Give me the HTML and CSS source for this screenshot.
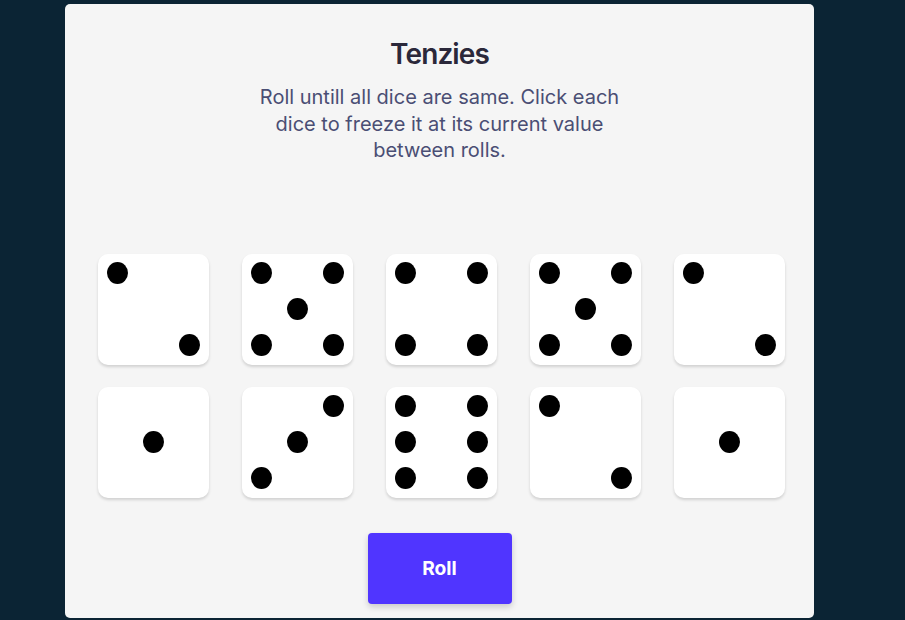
FILE: index.html
```html
<!DOCTYPE html>
<html lang="en">
<head>
<meta charset="utf-8">
<title>Tenzies</title>
<link rel="stylesheet" href="styles.css">
</head>
<body>
<main class="card">
  <h1 class="title">Tenzies</h1>
  <p class="instructions">Roll untill all dice are same. Click each dice to freeze it at its current value between rolls.</p>
  <div class="dice">
    <div class="die"><span class="dot r1 c1"></span><span class="dot r3 c3"></span></div>
    <div class="die"><span class="dot r1 c1"></span><span class="dot r1 c3"></span><span class="dot r2 c2"></span><span class="dot r3 c1"></span><span class="dot r3 c3"></span></div>
    <div class="die"><span class="dot r1 c1"></span><span class="dot r1 c3"></span><span class="dot r3 c1"></span><span class="dot r3 c3"></span></div>
    <div class="die"><span class="dot r1 c1"></span><span class="dot r1 c3"></span><span class="dot r2 c2"></span><span class="dot r3 c1"></span><span class="dot r3 c3"></span></div>
    <div class="die"><span class="dot r1 c1"></span><span class="dot r3 c3"></span></div>
    <div class="die"><span class="dot r2 c2"></span></div>
    <div class="die"><span class="dot r1 c3"></span><span class="dot r2 c2"></span><span class="dot r3 c1"></span></div>
    <div class="die"><span class="dot r1 c1"></span><span class="dot r1 c3"></span><span class="dot r2 c1"></span><span class="dot r2 c3"></span><span class="dot r3 c1"></span><span class="dot r3 c3"></span></div>
    <div class="die"><span class="dot r1 c1"></span><span class="dot r3 c3"></span></div>
    <div class="die"><span class="dot r2 c2"></span></div>
  </div>
  <button class="roll">Roll</button>
</main>
</body>
</html>
```
FILE: styles.css
```css
* { box-sizing: border-box; }
html, body { margin: 0; padding: 0; }
body {
  background: #0B2434;
  font-family: Inter, "Noto Sans", sans-serif;
  width: 905px;
  height: 620px;
  overflow: hidden;
}
.card {
  margin: 4px 0 0 65px;
  width: 749px;
  height: 614px;
  background: #F5F5F5;
  border-radius: 5px;
  padding: 32px 0 0 0;
  display: flex;
  flex-direction: column;
  align-items: center;
}
.title {
  margin: 0;
  font-size: 28px;
  line-height: 36px;
  font-weight: 600;
  color: #2B283A;
  letter-spacing: -0.9px;
}
.instructions {
  margin: 12px 0 0 0;
  width: 380px;
  text-align: center;
  font-size: 20px;
  line-height: 26.5px;
  font-weight: 400;
  color: #4A4E74;
}
.dice {
  align-self: flex-start;
  margin: 90px 0 0 33px;
  display: grid;
  grid-template-columns: repeat(5, 111px);
  grid-auto-rows: 111px;
  column-gap: 33px;
  row-gap: 22px;
}
.die {
  background: #FFFFFF;
  border-radius: 10px;
  box-shadow: 0 2px 3px rgba(0, 0, 0, 0.15);
  display: grid;
  grid-template-columns: repeat(3, 36px);
  grid-template-rows: repeat(3, 36px);
  padding: 1.5px;
  place-items: center;
}
.dot {
  width: 21px;
  height: 22px;
  border-radius: 50%;
  background: #000;
}
.r1 { grid-row: 1; }
.r2 { grid-row: 2; }
.r3 { grid-row: 3; }
.c1 { grid-column: 1; }
.c2 { grid-column: 2; }
.c3 { grid-column: 3; }
.roll {
  margin-top: 35px;
  width: 144px;
  height: 71px;
  border: none;
  border-radius: 4px;
  background: #5035FF;
  color: #FFFFFF;
  font-family: Inter, "Noto Sans", sans-serif;
  font-size: 19.2px;
  font-weight: 700;
  box-shadow: 0 3px 6px rgba(0, 0, 0, 0.18);
  cursor: pointer;
}
```
